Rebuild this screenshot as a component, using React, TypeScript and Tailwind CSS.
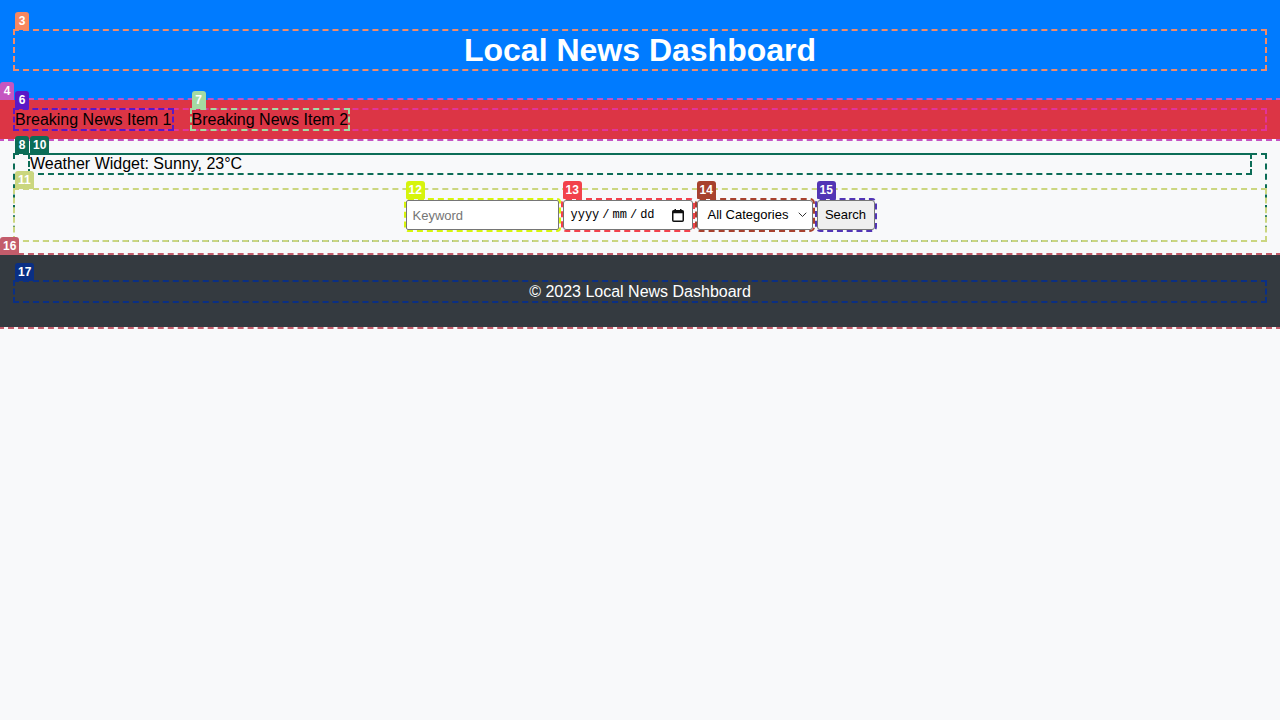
import type { ReactNode } from 'react'

function Badge({ n, className }: { n: string; className: string }) {
  return (
    <span
      className={`absolute -top-[19px] left-0 z-10 h-[18px] min-w-[14px] rounded-t-[3px] rounded-b-[1px] px-[3px] text-center text-[12px] font-bold leading-[18px] text-white ${className}`}
    >
      {n}
    </span>
  )
}

function CalendarIcon() {
  return (
    <svg width="12" height="13" viewBox="0 0 12 13" fill="none">
      <rect x="0.75" y="1.75" width="10.5" height="10.5" rx="1" stroke="#111" strokeWidth="1.5" />
      <rect x="0.75" y="1.75" width="10.5" height="2.5" fill="#111" />
      <rect x="2.5" y="0" width="1.5" height="2.5" fill="#111" />
      <rect x="8" y="0" width="1.5" height="2.5" fill="#111" />
    </svg>
  )
}

function Chevron() {
  return (
    <svg width="9" height="6" viewBox="0 0 9 6" fill="none">
      <path d="M1 1l3.5 3.5L8 1" stroke="#333" strokeWidth="1" strokeLinecap="round" strokeLinejoin="round" />
    </svg>
  )
}

function Field({ children }: { children: ReactNode }) {
  return <div className="relative">{children}</div>
}

export default function App() {
  return (
    <div className="min-h-screen bg-[#f8f9fa] font-['Liberation_Sans',Arial,sans-serif] text-black">
      {/* Header */}
      <header className="bg-[#007bff] px-[15px] py-[31px]">
        <h1 className="relative text-center text-[32px] font-bold leading-[38px] text-white outline-2 outline-dashed outline-[#f28b69]">
          <Badge n="3" className="bg-[#f8875f]" />
          Local News Dashboard
        </h1>
      </header>

      {/* Breaking news bar */}
      <section className="relative bg-[#dc3545] px-[15px] py-[10px] outline-2 outline-dashed outline-[#c452c4]">
        <span className="absolute -top-[18px] left-0 z-10 h-[18px] min-w-[14px] rounded-t-[3px] px-[3px] text-center text-[12px] font-bold leading-[18px] text-white bg-[#c556c0]">
          4
        </span>
        <div className="flex gap-[20px] outline-2 outline-dashed outline-[#e2339a]">
          <span className="relative text-[16px] leading-[19px] outline-2 outline-dashed outline-[#5a18c6]">
            <Badge n="6" className="bg-[#5a18c6]" />
            Breaking News Item 1
          </span>
          <span className="relative text-[16px] leading-[19px] outline-2 outline-dashed outline-[#a5dba2]">
            <Badge n="7" className="bg-[#a5dba2]" />
            Breaking News Item 2
          </span>
        </div>
      </section>

      {/* Main */}
      <main className="relative mx-[15px] mt-[16px] outline-2 outline-dashed outline-[#0c6d57]">
        <Badge n="8" className="bg-[#0c6d57]" />
        <div className="relative mx-[15px] text-[16px] leading-[18px] outline-2 outline-dashed outline-[#0c6d57]">
          <Badge n="10" className="bg-[#0c6d57]" />
          Weather Widget: Sunny, 23°C
        </div>

        <section className="relative mt-[17px] py-[10px] outline-2 outline-dashed outline-[#cbd680]">
          <Badge n="11" className="bg-[#cad67f]" />
          <form className="flex justify-center gap-[4px]" onSubmit={(e) => e.preventDefault()}>
            <Field>
              <Badge n="12" className="bg-[#d6f40c]" />
              <input
                type="text"
                placeholder="Keyword"
                className="h-[30px] w-[153px] rounded-[2px] border border-[#767676] bg-white px-[6px] text-[13px] placeholder:text-[#757575] outline-2 outline-dashed outline-[#d6f40c]"
              />
            </Field>
            <Field>
              <Badge n="13" className="bg-[#f2424b]" />
              <div className="flex h-[30px] w-[130px] items-center justify-between rounded-[3px] border border-[#767676] bg-white pl-[7px] pr-[8px] outline-2 outline-dashed outline-[#f2424b]">
                <span className="flex gap-[3px] font-['Liberation_Mono',monospace] text-[12px]">
                  <span>yyyy</span>
                  <span>/</span>
                  <span>mm</span>
                  <span>/</span>
                  <span>dd</span>
                </span>
                <CalendarIcon />
              </div>
            </Field>
            <Field>
              <Badge n="14" className="bg-[#a7412d]" />
              <div className="flex h-[30px] w-[116px] items-center justify-between rounded-[3px] border border-[#767676] bg-white pl-[10px] pr-[5px] text-[13px] outline-2 outline-dashed outline-[#a7412d]">
                <span>All Categories</span>
                <Chevron />
              </div>
            </Field>
            <Field>
              <Badge n="15" className="bg-[#5235b5]" />
              <button
                type="submit"
                className="h-[30px] w-[58px] rounded-[3px] border border-[#767676] bg-[#efefef] text-[13px] outline-2 outline-dashed outline-[#5235b5]"
              >
                Search
              </button>
            </Field>
          </form>
        </section>
      </main>

      {/* Footer */}
      <footer className="relative mt-[15px] bg-[#343a40] px-[15px] pt-[27px] pb-[26px] outline-2 outline-dashed outline-[#c35c6b]">
        <span className="absolute -top-[18px] left-0 z-10 h-[18px] min-w-[14px] rounded-t-[3px] px-[3px] text-center text-[12px] font-bold leading-[18px] text-white bg-[#c35c6b]">
          16
        </span>
        <p className="relative text-center text-[16px] leading-[19px] text-white outline-2 outline-dashed outline-[#0a2f84]">
          <Badge n="17" className="bg-[#0a2f84]" />
          © 2023 Local News Dashboard
        </p>
      </footer>
    </div>
  )
}
